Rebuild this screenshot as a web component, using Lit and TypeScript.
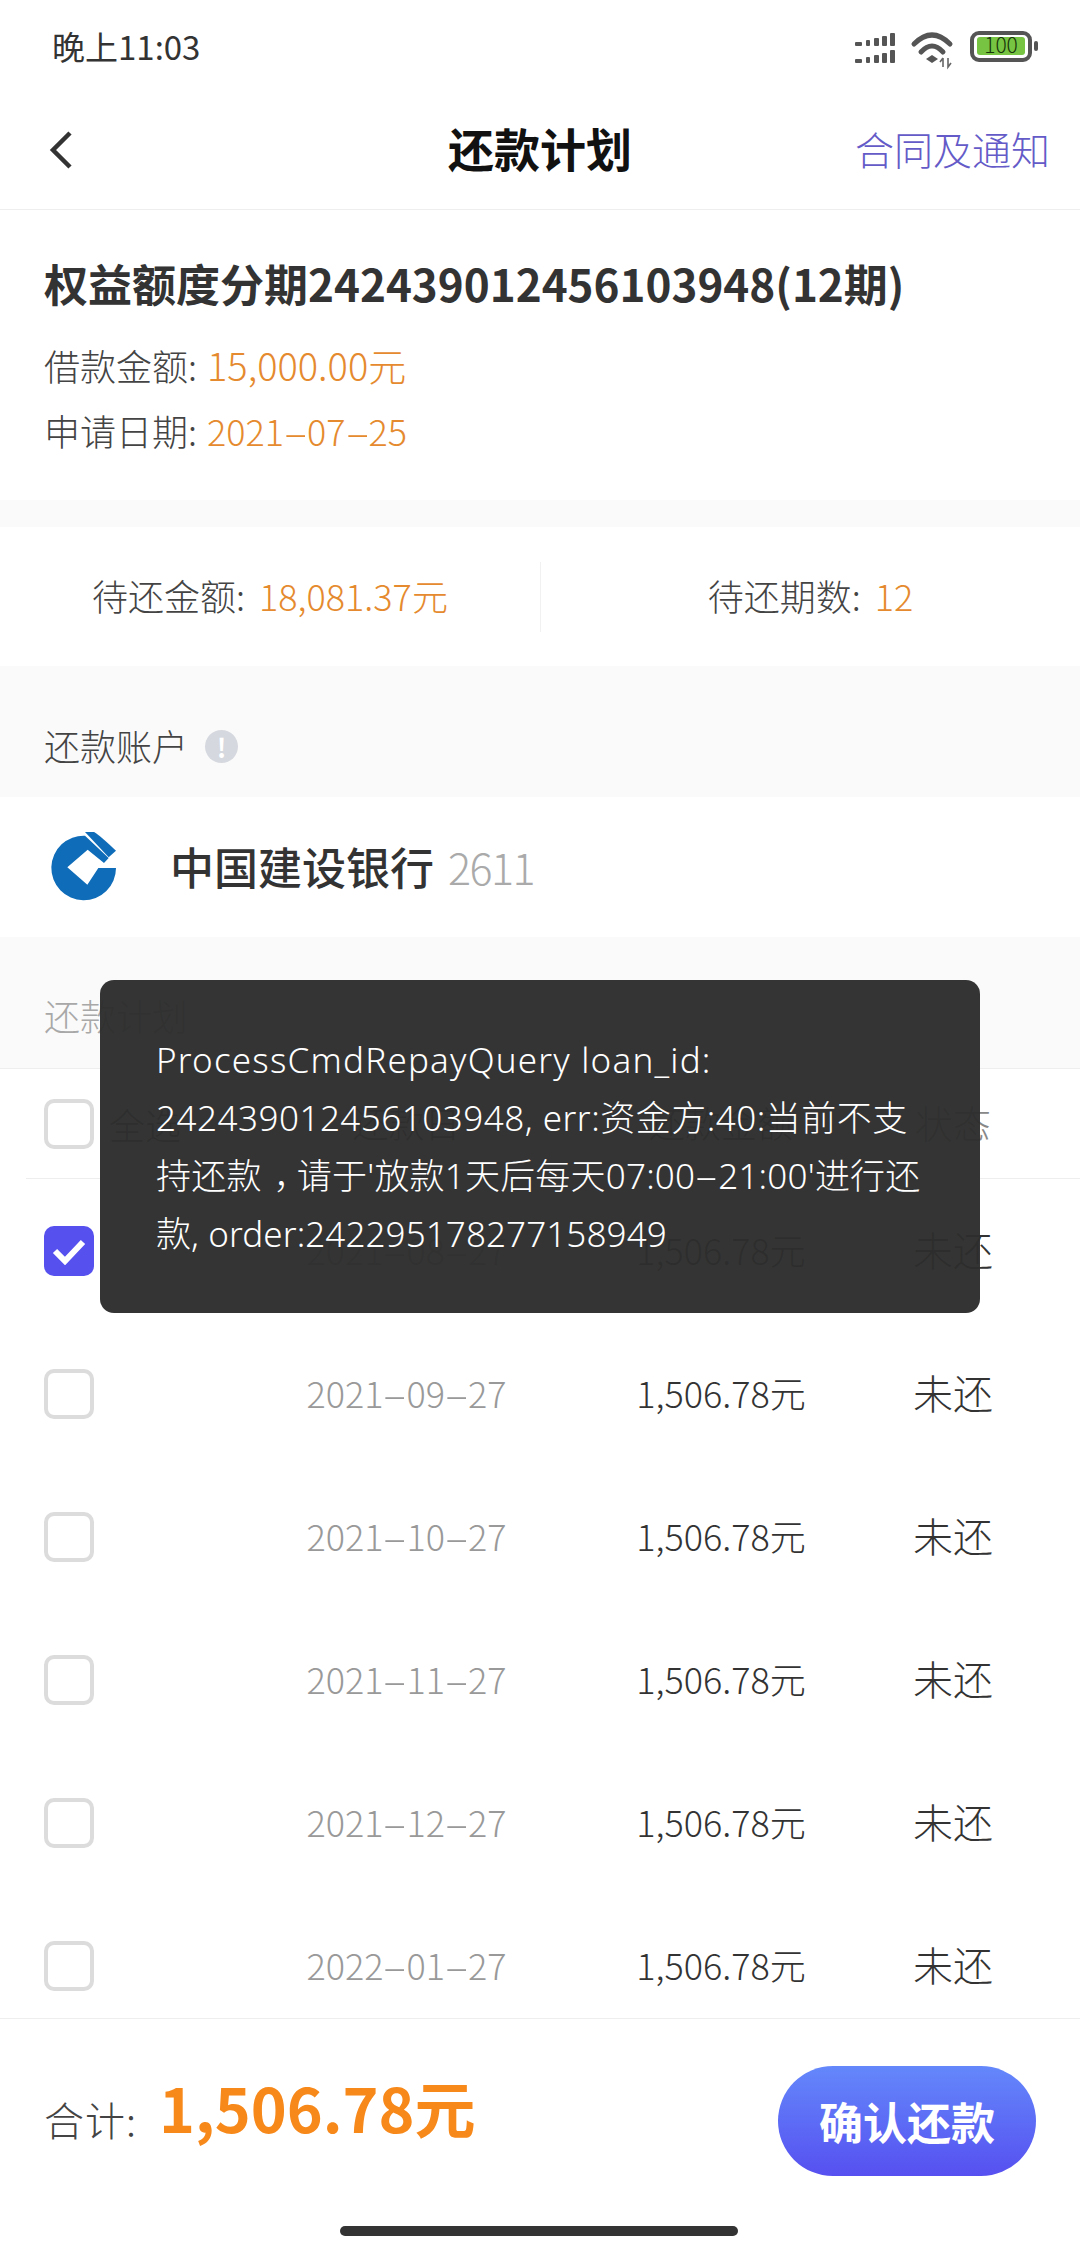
import { LitElement, html, css, svg } from "lit";
import { customElement } from "lit/decorators.js";

const rows = ["2021-08-27", "2021-09-27", "2021-10-27", "2021-11-27", "2021-12-27", "2022-01-27"];

const dated = (s: string) => {
  const [y, m, d] = s.split("-");
  return html`${y}<span class="hy">-</span>${m}<span class="hy">-</span>${d}`;
};

@customElement("app-root")
export class AppRoot extends LitElement {
  static styles = css`
    :host {
      display: block;
      width: 1080px;
      height: 2248px;
      background: #fafafa;
      font-family: "Noto Sans CJK SC", "Noto Sans", sans-serif;
      color: #333;
      font-weight: 300;
      overflow: hidden;
    }
    .page { position: relative; width: 1080px; height: 2248px; display: flex; flex-direction: column; }
    .hy { display: inline-block; width: 23px; text-align: center; transform: scaleX(2.1); }
    .top { background: #fff; flex: none; }
    .status { height: 70px; padding: 0 39px 0 52px; display: flex; align-items: flex-start; justify-content: space-between; }
    .time { margin-top: 22px; font-size: 33px; line-height: 48px; color: #333; font-weight: 400; }
    .status-icons { margin-top: 31px; display: block; overflow: visible; }
    .nav { height: 140px; border-bottom: 1px solid #eee; display: grid; grid-template-columns: 1fr auto 1fr; align-items: center; padding: 20px 30px 0; box-sizing: border-box; }
    .back { display: block; margin-left: 18px; }
    .nav-title { font-size: 46px; font-weight: 700; color: #111; line-height: 60px; padding-bottom: 5px; }
    .nav-link { justify-self: end; font-size: 39px; color: #645bc8; line-height: 60px; padding-bottom: 3px; }
    .loan { background: #fff; height: 290px; box-sizing: border-box; padding: 43px 44px 0; }
    .loan h1 { margin: 0 0 19px; font-size: 44px; line-height: 60px; font-weight: 700; color: #333; white-space: nowrap; }
    .line { font-size: 36px; line-height: 65px; color: #444; white-space: nowrap; }
    .val { color: #e58a2e; margin-left: 2px; }
    .val.wide { font-size: 38px; }
    .stats { margin-top: 27px; background: #fff; height: 139px; display: grid; grid-template-columns: 1fr 1fr; align-items: center; font-size: 36px; color: #444; }
    .stat { text-align: center; line-height: 66px; padding-bottom: 4px; white-space: nowrap; }
    .stat + .stat { border-left: 1px solid #f1f1f1; }
    .stat .val { margin-left: 6px; }
    .section { height: 131px; box-sizing: border-box; display: flex; align-items: center; padding-left: 44px; font-size: 36px; color: #444; }
    .sec-a { padding-top: 27px; }
    .sec-b { padding-top: 25px; color: #a8a8a8; }
    .info { margin-left: 17px; margin-top: 3px; width: 33px; height: 33px; border-radius: 50%; background: #d5d8de; color: #fff; font-weight: 700; font-size: 26px; line-height: 33px; text-align: center; }
    .bank { height: 140px; background: #fff; display: flex; align-items: center; padding-left: 52px; }
    .bank svg { display: block; margin-left: -22px; margin-top: -8px; }
    .bank-name { margin-left: 30px; margin-bottom: 2px; font-size: 44px; font-weight: 500; color: #333; white-space: nowrap; }
    .tail { margin-left: 14px; margin-bottom: 2px; font-size: 43px; color: #aaa; font-weight: 300; letter-spacing: -1.5px; }
    .list { flex: 1 1 0; min-height: 0; overflow: hidden; background: #fff; border-top: 1px solid #eee; }
    .head, .row { display: grid; grid-template-columns: 200px 325px 304px 160px; align-items: center; }
    .head { height: 109px; margin-left: 26px; padding-left: 18px; border-bottom: 1px solid #eee; font-size: 36px; color: #444; }
    .row { height: 143px; padding-left: 44px; font-size: 36px; }
    .sel { display: flex; align-items: center; gap: 15px; }
    .box { width: 50px; height: 50px; box-sizing: border-box; border: 4px solid #dcdcdc; border-radius: 10px; background: #fff; flex: none; }
    .box.on { background: #5650ee; border: none; display: flex; align-items: center; justify-content: center; }
    .c { text-align: center; white-space: nowrap; padding-bottom: 4px; }
    .date { color: #999; }
    .amt { color: #333; }
    .st { color: #333; font-size: 40px; }
    .head .st { color: #888; font-size: 38px; }
    .foot { flex: none; height: 230px; background: #fff; border-top: 1px solid #eee; box-sizing: border-box; padding: 47px 44px 0 44px; display: flex; align-items: flex-start; justify-content: space-between; position: relative; }
    .sum { display: flex; align-items: center; height: 110px; }
    .sum-l { font-size: 40px; color: #444; margin-top: -4px; margin-right: 22px; letter-spacing: 1px; }
    .sum-v { font-size: 61px; font-weight: 700; color: #f7881a; margin-top: -30px; white-space: nowrap; }
    .pay { width: 258px; height: 110px; border-radius: 55px; background: linear-gradient(180deg, #6488fb, #5650f0); color: #fff; font-size: 44px; font-weight: 700; display: flex; align-items: center; justify-content: center; }
    .home { position: absolute; left: 340px; top: 207px; width: 398px; height: 10px; border-radius: 5px; background: #333; }
    .toast { position: absolute; left: 100px; top: 980px; width: 880px; height: 333px; box-sizing: border-box; padding: 51px 56px 0; border-radius: 14px; background: rgba(45, 45, 45, 0.97); color: #fff; font-family: "Noto Sans", "Noto Sans CJK SC", sans-serif; font-size: 35px; line-height: 58px; white-space: nowrap; font-weight: 300; }
    .toast-line { display: block; }
    .l1 { letter-spacing: 1.2px; }
    .l2 { letter-spacing: 0.5px; }
    .l3 { letter-spacing: 0.2px; }
    .l4 { letter-spacing: 0.1px; }
    .cm { padding-left: 12px; margin-right: -12px; }
  `;

  private statusIcons() {
    const bars = [[0, 7, 4], [11, 4, 6], [19, 5, 8], [27, 5, 10], [35, 5, 13]];
    return html`<svg class="status-icons" width="186" height="44" viewBox="0 0 186 44">
      ${[15, 32].map((base) => bars.map(([x, w, h]) => svg`<rect x=${x} y=${base - h} width=${w} height=${h} rx="1" fill="#555"/>`))}
      <g fill="none" stroke="#555" stroke-width="5" stroke-linecap="round">
        <path d="M59 13 Q77 -5 95 13"/>
        <path d="M66 21 Q77 9 88 21"/>
      </g>
      <path d="M71 28 L77 24 L83 28 L77 32 Z" fill="#555"/>
      <path d="M88 27 V36 M85 31 L88 27 M93 27 V36 L96 32" stroke="#666" stroke-width="1.6" fill="none"/>
      <rect x="117" y="2" width="58" height="27" rx="7" fill="#fff" stroke="#555" stroke-width="4"/>
      <rect x="122" y="6" width="48" height="18" rx="3" fill="#76c442"/>
      <text x="146" y="22" text-anchor="middle" font-size="21" fill="#16340a" font-family="Noto Sans CJK SC" font-weight="300">100</text>
      <rect x="179" y="10" width="4" height="10" rx="2" fill="#555"/>
    </svg>`;
  }

  render() {
    return html`
      <div class="page" lang="zh-CN">
        <div class="top">
          <div class="status"><span class="time">晚上11:03</span>${this.statusIcons()}</div>
          <div class="nav">
            <svg class="back" width="26" height="38" viewBox="0 0 26 38"><path d="M22 2 L5 19 L22 36" fill="none" stroke="#333" stroke-width="4.5"/></svg>
            <div class="nav-title">还款计划</div>
            <div class="nav-link">合同及通知</div>
          </div>
        </div>
        <div class="loan">
          <h1>权益额度分期242439012456103948(12期)</h1>
          <div class="line">借款金额: <span class="val wide">15,000.00元</span></div>
          <div class="line">申请日期: <span class="val">${dated("2021-07-25")}</span></div>
        </div>
        <div class="stats">
          <div class="stat">待还金额: <span class="val">18,081.37元</span></div>
          <div class="stat">待还期数: <span class="val">12</span></div>
        </div>
        <div class="section sec-a">还款账户<span class="info">!</span></div>
        <div class="bank">
          <svg width="110" height="90" viewBox="0 0 330 270">
            <path fill="#0f6cb8" d="M165 53 A97 97 0 1 0 258 150 L205 150 L172 200 L112 148 L173 95 L222 135 L236 120 Z"/>
            <path fill="#0f6cb8" d="M165 42 L192 42 Q200 44 258 98 L236 118 Z"/>
          </svg>
          <span class="bank-name">中国建设银行</span><span class="tail">2611</span>
        </div>
        <div class="section sec-b">还款计划</div>
        <div class="list">
          <div class="head">
            <div class="sel"><span class="box"></span><span>全选</span></div>
            <div class="c">还款日</div>
            <div class="c">还款金额</div>
            <div class="c st">状态</div>
          </div>
          ${rows.map((d, i) => html`
            <div class="row">
              <div class="sel">
                ${i === 0
                  ? html`<span class="box on"><svg width="34" height="28" viewBox="0 0 34 28"><path d="M3 14 L13 24 L31 5" fill="none" stroke="#fff" stroke-width="6"/></svg></span>`
                  : html`<span class="box"></span>`}
              </div>
              <div class="c date">${dated(d)}</div>
              <div class="c amt">1,506.78元</div>
              <div class="c st">未还</div>
            </div>`)}
        </div>
        <div class="foot">
          <div class="sum"><span class="sum-l">合计:</span><span class="sum-v">1,506.78元</span></div>
          <div class="pay">确认还款</div>
          <div class="home"></div>
        </div>
        <div class="toast">
          <span class="toast-line l1">ProcessCmdRepayQuery loan_id:</span>
          <span class="toast-line l2">242439012456103948, err:资金方:40:当前不支</span>
          <span class="toast-line l3">持还款<span class="cm">，</span>请于'放款1天后每天07:00<span class="hy">-</span>21:00'进行还</span>
          <span class="toast-line l4">款, order:242295178277158949</span>
        </div>
      </div>
    `;
  }
}
